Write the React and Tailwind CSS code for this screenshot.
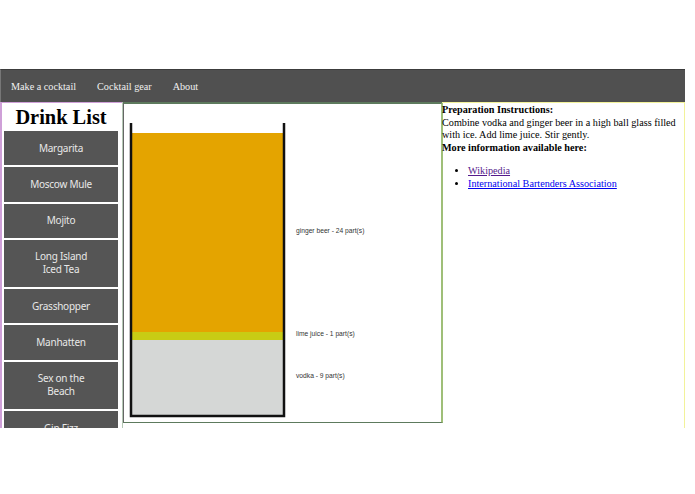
const drinks = [
  ['Margarita'],
  ['Moscow Mule'],
  ['Mojito'],
  ['Long Island', 'Iced Tea'],
  ['Grasshopper'],
  ['Manhatten'],
  ['Sex on the', 'Beach'],
  ['Gin Fizz'],
]

function Glass() {
  return (
    <svg width="317" height="319" viewBox="0 0 317 319" className="block">
      <rect x="7" y="29" width="152" height="199" fill="#e4a400" />
      <rect x="7" y="228" width="152" height="8" fill="#c8cc14" />
      <rect x="7" y="236" width="152" height="76" fill="#d5d7d6" />
      <path d="M7 19V312H160V19" fill="none" stroke="#111" strokeWidth="2.5" />
      <g fontFamily="'Liberation Sans', Arial, sans-serif" fontSize="6.7" fill="#333">
        <text x="172" y="129">ginger beer - 24 part(s)</text>
        <text x="172" y="232">lime juice - 1 part(s)</text>
        <text x="172" y="274">vodka - 9 part(s)</text>
      </g>
    </svg>
  )
}

export default function App() {
  return (
    <div className="w-[695px] h-[494px] bg-white overflow-hidden pt-[69px] font-['Liberation_Serif',serif]">
      {/* Nav */}
      <div className="w-[685px] h-[33px] bg-[#505050] border-t border-[#3c3c3c] border-l border-l-[#777] flex items-center gap-[21px] pl-[10px] pt-[1px] text-[10.2px] text-[#f0f0f0]">
        <span>Make a cocktail</span>
        <span>Cocktail gear</span>
        <span>About</span>
      </div>

      <div className="w-[685px] h-[326px] flex overflow-hidden">
        {/* Sidebar */}
        <div className="w-[122px] shrink-0 border-l-2 border-t border-[#cfa0d8] pl-[2px] pr-[4px] pt-[1px]">
          <h1 className="text-[20.4px] leading-[27px] font-bold text-center text-black">Drink List</h1>
          <div className="flex flex-col gap-[2px]">
            {drinks.map((d) => (
              <div
                key={d[0]}
                className="w-[114px] shrink-0 bg-[#555555] py-[10.65px] text-center text-[10px] tracking-[-0.25px] leading-[13px] text-[#e8e8e8] font-['Noto_Sans',sans-serif]"
              >
                {d.map((line) => (
                  <div key={line}>{line}</div>
                ))}
              </div>
            ))}
          </div>
        </div>

        {/* Chart */}
        <div className="w-[321px] shrink-0 border-l border-[#b5c9b5]">
          <div className="h-[321px] border-t-2 border-b border-[#5d7a5d] border-r-2 border-r-[#9fbf78] border-l border-l-[#666] bg-white">
            <Glass />
          </div>
        </div>

        {/* Instructions */}
        <div className="flex-1 -ml-[1px] border-t border-r border-[#f2f29a] pt-[1px] text-[10.2px] leading-[12.6px] text-black">
          <p className="font-bold">Preparation Instructions:</p>
          <p>Combine vodka and ginger beer in a high ball glass filled with ice. Add lime juice. Stir gently.</p>
          <p className="font-bold">More information available here:</p>
          <ul className="list-disc pl-[26px] mt-[11px]">
            <li><a href="#" className="underline text-[#551a8b]">Wikipedia</a></li>
            <li><a href="#" className="underline text-[#0000ee]">International Bartenders Association</a></li>
          </ul>
        </div>
      </div>
    </div>
  )
}
